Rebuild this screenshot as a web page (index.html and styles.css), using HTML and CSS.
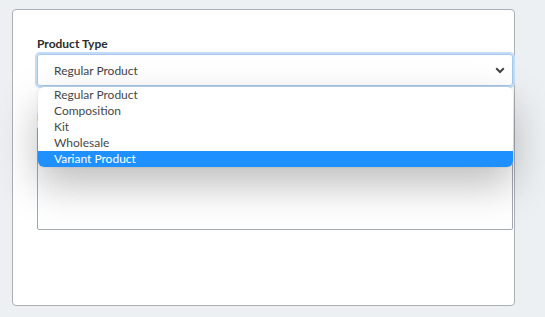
FILE: index.html
```html
<!DOCTYPE html>
<html>
<head>
<meta charset="utf-8">
<link rel="stylesheet" href="styles.css">
</head>
<body>
<div class="card">
  <div class="field">
    <label class="label">Product Type</label>
    <div class="select-wrap">
      <div class="select">
        <span>Regular Product</span>
        <svg class="chev" width="10" height="7" viewBox="0 0 10 7"><path d="M1.2 1.2 L5 5 L8.8 1.2" fill="none" stroke="#444" stroke-width="2"/></svg>
      </div>
      <ul class="menu">
        <li>Regular Product</li>
        <li>Composition</li>
        <li>Kit</li>
        <li>Wholesale</li>
        <li class="active">Variant Product</li>
      </ul>
    </div>
  </div>
  <div class="field second">
    <label class="label">Description</label>
    <div class="textarea"></div>
  </div>
</div>
</body>
</html>
```

FILE: styles.css
```css
html, body {
  margin: 0;
  padding: 0;
  background: #edf0f2;
  font-family: Lato, "Open Sans", sans-serif;
}
body {
  padding: 9px 0 0 12px;
  height: 317px;
  box-sizing: border-box;
  overflow: hidden;
}
.card {
  width: 503px;
  height: 297px;
  box-sizing: border-box;
  background: #fff;
  border: 1px solid #a9b0b8;
  border-radius: 4px;
  padding: 26px 2px 0 24px;
}
.field {
  display: flex;
  flex-direction: column;
  width: 476px;
}
.label {
  font-size: 12px;
  font-weight: bold;
  color: #2c2c2c;
  line-height: 15px;
  margin-bottom: 3px;
}
.select-wrap {
  position: relative;
}
.select {
  height: 32px;
  box-sizing: border-box;
  border: 1px solid #a6c8ea;
  border-radius: 3px;
  box-shadow: 0 0 0 2px #c3dcf5;
  display: flex;
  align-items: center;
  justify-content: space-between;
  padding: 0 7px 0 16px;
  font-size: 12px;
  color: #444;
}
.chev {
  display: block;
  margin-top: 1px;
}
.menu {
  position: absolute;
  left: 1px;
  right: 0;
  top: 33px;
  margin: 0;
  padding: 0;
  list-style: none;
  background: #fff;
  border-radius: 6px;
  box-shadow: 0 18px 40px rgba(0,0,0,0.26), 0 0 2px rgba(0,0,0,0.15);
  overflow: hidden;
  z-index: 2;
}
.menu li {
  height: 16px;
  line-height: 16px;
  padding-left: 16px;
  font-size: 12px;
  color: #484848;
}
.menu li.active {
  background: #1e90ff;
  color: #fff;
}
.second {
  margin-top: 23px;
}
.second .label {
  margin-bottom: 3px;
  color: #6b4a2a;
}
.textarea {
  height: 103px;
  box-sizing: border-box;
  border: 1px solid #a3a9b1;
  border-radius: 2px;
}
```
